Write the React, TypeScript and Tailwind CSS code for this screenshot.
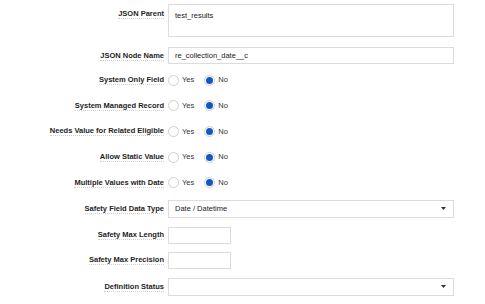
import React from 'react';

const font = { fontFamily: '"Liberation Sans", Arial, sans-serif' };

function Label({ children, top }: { children: React.ReactNode; top?: boolean }) {
    return (
        <div className={`w-[168px] shrink-0 flex justify-end pr-[4px] ${top ? 'items-start pt-[5px]' : 'items-center'}`}>
            <span className="text-[7.5px] font-bold text-[#1e1e1e] leading-[9px] border-b border-dotted border-[#cfcfcf]">
                {children}
            </span>
        </div>
    );
}

function Radio({ checked, label }: { checked?: boolean; label: string }) {
    return (
        <div className="flex items-center gap-[3px]">
            <span className="w-[11px] h-[11px] rounded-full border border-[#cfcfcf] bg-white flex items-center justify-center">
                {checked && <span className="w-[7px] h-[7px] rounded-full bg-[#1456c8]" />}
            </span>
            <span className="text-[7.5px] text-[#333]">{label}</span>
        </div>
    );
}

function RadioRow({ label }: { label: string }) {
    return (
        <div className="flex h-[20px]">
            <Label>{label}</Label>
            <div className="flex items-center gap-[10px]">
                <Radio label="Yes" />
                <Radio label="No" checked />
            </div>
        </div>
    );
}

function Select({ value }: { value?: string }) {
    return (
        <div className="w-[286px] h-full border border-[#dcdcdc] bg-white flex items-center justify-between pl-[6px] pr-[7px]">
            <span className="text-[7.5px] text-[#222]">{value}</span>
            <svg width="5" height="3" viewBox="0 0 5 3">
                <path d="M0 0 H5 L2.5 3 Z" fill="#333" />
            </svg>
        </div>
    );
}

export default function App() {
    return (
        <div className="w-[485px] h-[304px] bg-white pt-[4px] overflow-hidden" style={font}>
            <div className="flex h-[33px]">
                <Label top>JSON Parent</Label>
                <div className="w-[286px] h-full border border-[#dcdcdc] px-[6px] pt-[5px] text-[7.5px] text-[#222]">
                    test_results
                </div>
            </div>

            <div className="flex h-[17px] mt-[10px]">
                <Label>JSON Node Name</Label>
                <div className="w-[286px] h-full border border-[#dcdcdc] px-[6px] flex items-center text-[7.5px] text-[#222]">
                    re_collection_date__c
                </div>
            </div>

            <div className="mt-[6px] flex flex-col gap-[5.7px]">
                <RadioRow label="System Only Field" />
                <RadioRow label="System Managed Record" />
                <RadioRow label="Needs Value for Related Eligible" />
                <RadioRow label="Allow Static Value" />
                <RadioRow label="Multiple Values with Date" />
            </div>

            <div className="flex h-[18px] mt-[7px]">
                <Label>Safety Field Data Type</Label>
                <Select value="Date / Datetime" />
            </div>

            <div className="flex h-[17px] mt-[9px]">
                <Label>Safety Max Length</Label>
                <div className="w-[63px] h-full border border-[#dcdcdc] bg-white" />
            </div>

            <div className="flex h-[17px] mt-[8px]">
                <Label>Safety Max Precision</Label>
                <div className="w-[63px] h-full border border-[#dcdcdc] bg-white" />
            </div>

            <div className="flex h-[18px] mt-[9px]">
                <Label>Definition Status</Label>
                <Select />
            </div>
        </div>
    );
}
